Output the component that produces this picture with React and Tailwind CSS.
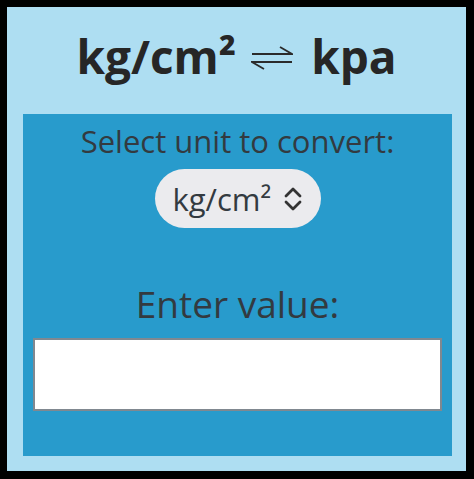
import React from "react";

function Harpoons() {
  return (
    <svg width="42" height="26" viewBox="0 0 42 26" className="ml-[15px] mr-[18px] mt-[4px]" fill="none" stroke="#2b2b2b" strokeWidth="1.8" strokeLinecap="butt">
      <path d="M1 9 H41 L29 2" />
      <path d="M41 17 H1 L13 24" />
    </svg>
  );
}

function UpDown() {
  return (
    <svg width="20" height="26" viewBox="0 0 20 26" fill="none" stroke="#333" strokeWidth="2.8" strokeLinecap="round" strokeLinejoin="round">
      <path d="M3 10 L10 3 L17 10" />
      <path d="M3 16 L10 23 L17 16" />
    </svg>
  );
}

export default function App() {
  return (
    <div className="w-[474px] h-[479px] bg-black pt-[7px] pl-[7px] pr-[8px] pb-[8px]" style={{ fontFamily: '"Open Sans", "Liberation Sans", sans-serif' }}>
      <div className="w-full h-full bg-[#aedef2] flex flex-col">
        <div className="h-[107px] flex items-center justify-center text-[#262626] font-bold text-[46px] leading-[56px] pb-[10px]">
          <span>kg/cm²</span>
          <Harpoons />
          <span>kpa</span>
        </div>
        <div className="ml-[16px] mr-[14px] mb-[15px] flex-1 bg-[#289bcc] flex flex-col items-center pt-[9px] px-[10px]">
          <div className="text-[31px] leading-[36px] text-[#333a40]">Select unit to convert:</div>
          <div className="mt-[10px] w-[166px] h-[59px] rounded-full bg-[#ebebee] flex items-center pl-[18px] gap-[12px] text-[31px] text-[#333a40]">
            <span className="leading-[36px]">kg/cm²</span>
            <UpDown />
          </div>
          <div className="mt-[54px] text-[37px] leading-[44px] text-[#333a40]">Enter value:</div>
          <input className="mt-[12px] w-full h-[73px] bg-white border-2 border-[#808890] outline-none" />
        </div>
      </div>
    </div>
  );
}
